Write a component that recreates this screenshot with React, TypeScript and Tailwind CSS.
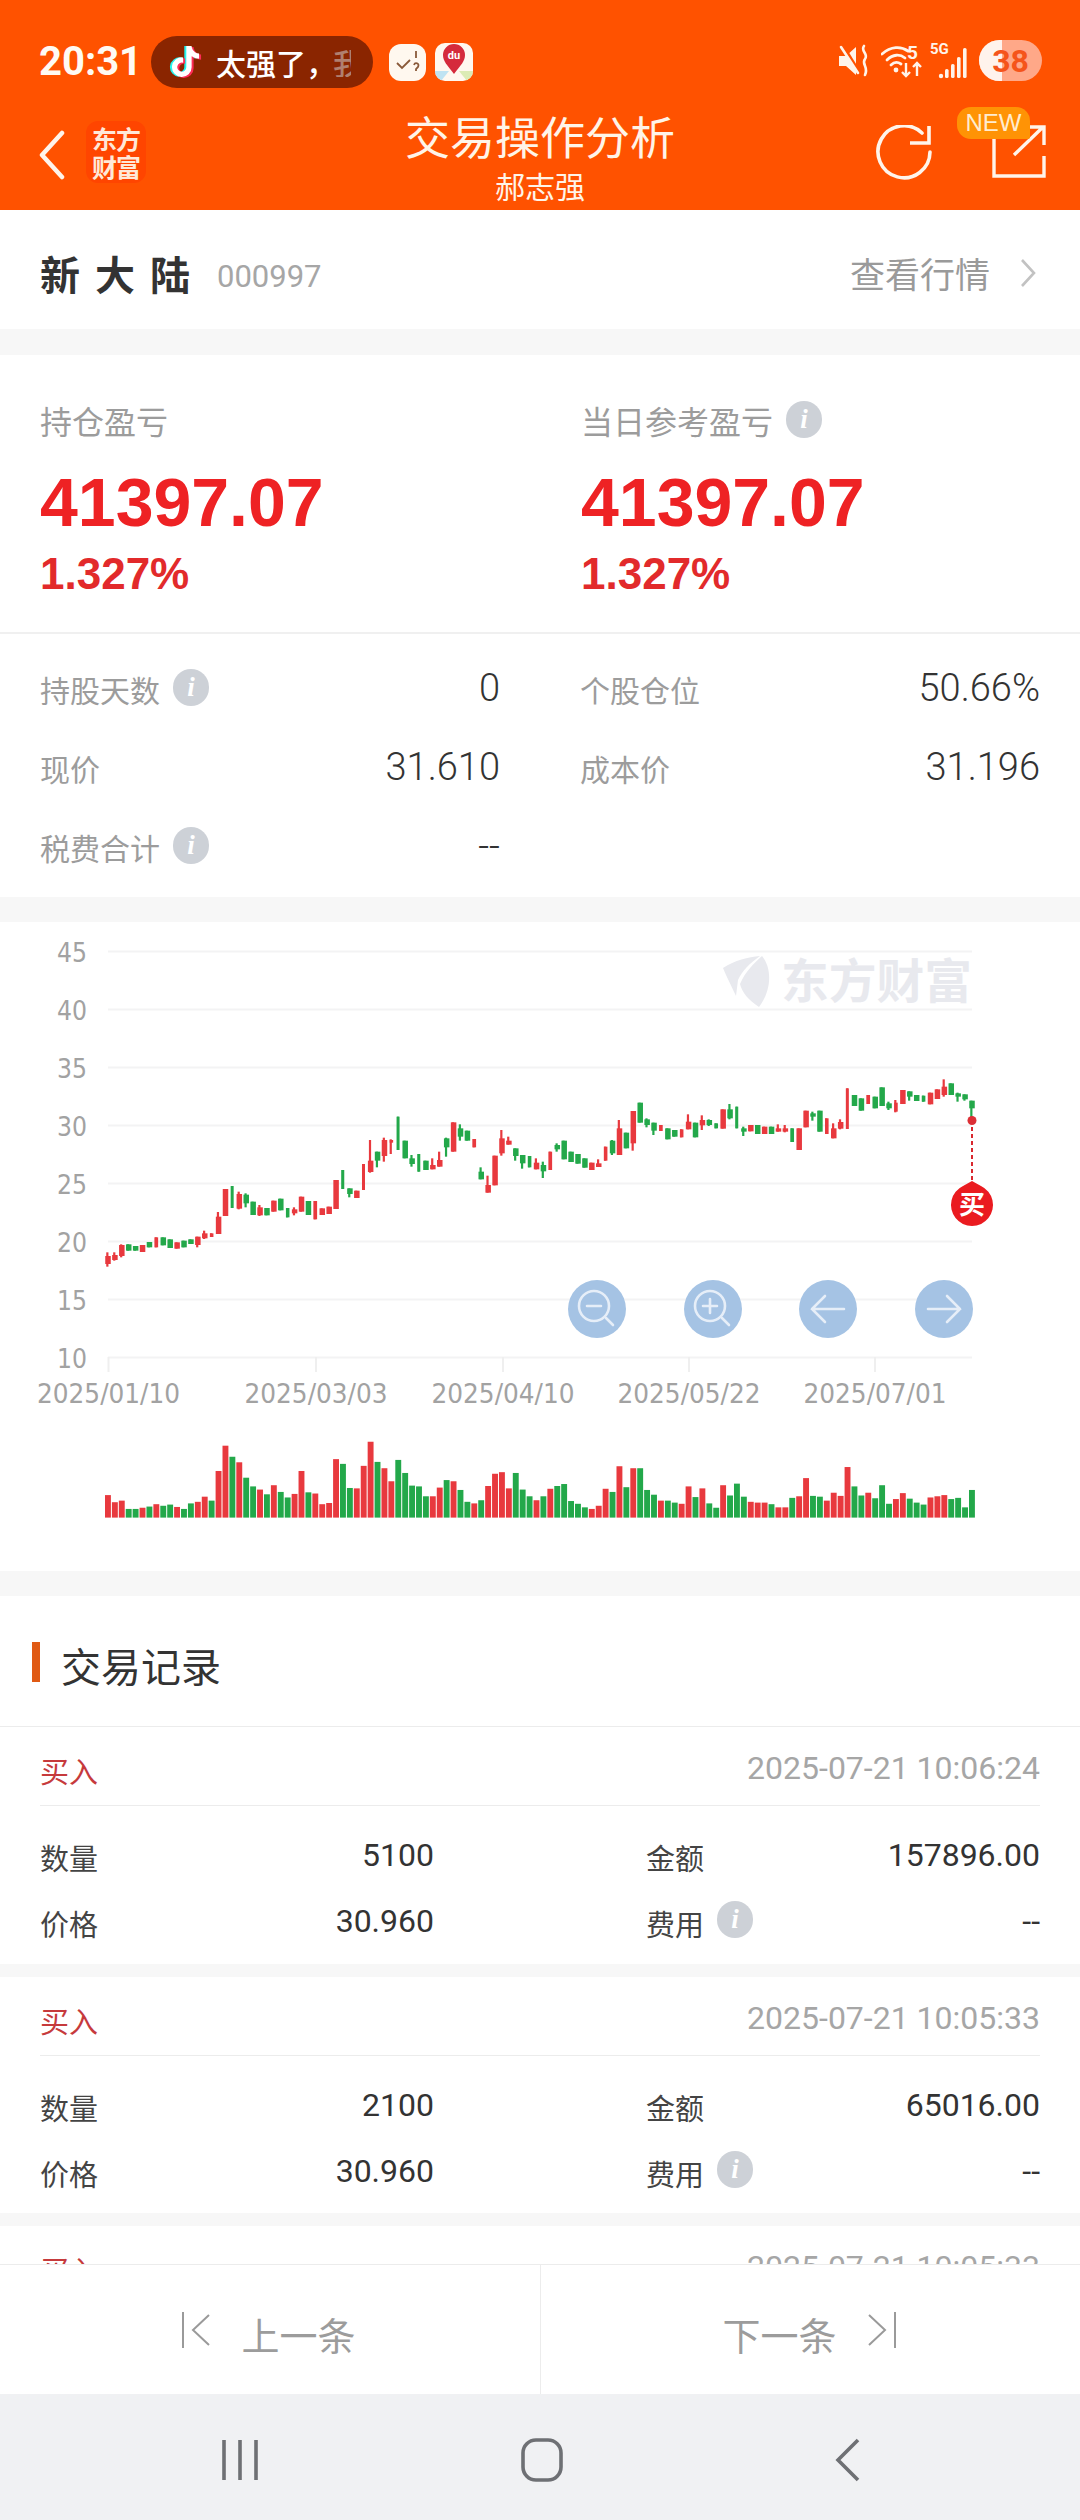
import React from "react";
import { FaTiktok } from "react-icons/fa";

type C = [number, number, number, number?, number?, number?];
const R = 1, G = 0;
// [colour, top, bottom, bodyTop, bodyBottom, bodyWidth] in crop pixels (3x)
const c1: C[] = [
  [R,397,440,408,432],[R,397,422,405,420],[R,373,412,375,408],[G,373,392],[G,378,392],[R,375,396],[G,366,382],[R,352,382,352,382,3.5],[G,352,376],[G,358,384],[R,367,386],[G,362,382],[G,358,372],[R,350,382,350,375],[R,332,357,340,355],[R,340,351,340,351,3.5],[R,276,342,290,342],[R,207,288],[G,198,264,198,264,2.5],[R,215,268,222,266],[G,220,262,224,250],[G,245,285],[R,255,288,262,286],[G,264,286],[R,242,275],[G,236,271],[G,264,292,264,292,3.5],[R,262,286,268,280],[R,230,275],[G,243,285],[R,243,298,243,298,3.5],
];
const c2: C[] = [
  [R,355,375],[R,350,372],[R,270,357],[G,240,297,240,297,2.5],[G,295,322,295,312],[R,302,324],[R,222,300,222,300,2.5],[R,150,248,212,246],[G,185,232,185,212],[R,143,215,150,198],[R,148,192,150,158,3.5],[G,80,180,80,180,2.5],[G,152,205],[G,195,230,205,222],[G,192,245,192,245,2.5],[G,212,240],[R,205,238,225,238],[R,185,230,210,230],[G,143,200,145,172],[R,97,185],[G,103,152,115,140],[G,122,152],[R,147,172,147,172,3.5],[G,232,268,245,268],[R,257,308,285,308],[R,197,286],[R,120,197,145,190],[R,140,164,152,164],[G,175,212,175,198],[G,195,236,195,220],[G,198,232,198,232,3.5],[R,205,238,218,238],[G,215,264,225,244],
];
const c3: C[] = [
  [R,275,330,275,330,3.5],[G,250,275,255,268],[G,242,298],[G,275,306],[G,282,311],[G,295,323],[R,308,330],[R,298,321,310,321],[R,260,302,260,302,3.5],[G,240,285,242,280],[R,180,285,205,285],[G,218,265],[R,153,272,153,250],[G,128,188],[G,175,202,178,195],[G,188,225,188,212],[R,195,213,195,213,3.5],[G,205,238],[G,210,230],[R,208,232,208,232,3.5],[R,163,208,185,208],[G,188,232],[R,166,210,180,196],[G,178,198,180,195],[G,190,205,190,205,3.5],[R,148,206],[G,132,178,148,175],[G,140,205,140,205,2.5],[G,200,228,205,215],[R,195,214],[G,195,222],[R,200,222],
];
const c4: C[] = [
  [G,200,222],[R,193,215,205,215],[R,195,217,205,215],[G,205,246,205,246,3.5],[R,205,270],[R,152,202],[G,155,182,160,170],[G,152,215],[R,175,222,175,222,3.5],[R,190,235,205,235],[R,178,208,186,206],[R,85,207,85,207,2.5],[G,105,138],[G,115,152],[R,105,132,105,132,3.5],[G,110,145],[G,82,138],[G,125,150,130,145],[R,120,157,128,155,3.5],[R,90,132],[G,94,122,94,110],[G,105,123],[G,107,125,107,125,3.5],[R,98,133],[R,88,117],[R,58,110,80,105],[G,70,105],[G,98,125,100,110],[G,103,122,103,118],[G,122,172,122,145],
];
const candles: { c: number; t: number; b: number; bt: number; bb: number; w: number }[] = [
  ...c1.map((d) => [1120, d] as const),
  ...c2.map((d) => [1090, d] as const),
  ...c3.map((d) => [1060, d] as const),
  ...c4.map((d) => [1060, d] as const),
].map(([base, d]) => ({
  c: d[0],
  t: base + d[1] / 3,
  b: base + d[2] / 3,
  bt: base + (d[3] ?? d[1]) / 3,
  bb: base + (d[4] ?? d[2]) / 3,
  w: d[5] ?? 5.5,
}));

const vol =
  "R1455 R1473 R1469 G1490 G1490 R1487 G1484 R1478 G1482 G1479 R1485 G1490 G1476 R1472 R1459 G1469 R1394 R1330 G1358 R1372 G1411 G1433 R1441 G1453 R1430 G1447 G1461 R1452 R1394 G1448 R1451 R1478 R1475 R1364 G1376 G1437 R1438 R1381 R1320 G1371 R1387 R1420 G1366 G1399 G1431 G1433 G1458 R1458 R1436 G1417 R1420 G1442 G1472 R1476 G1468 R1432 R1401 R1397 R1438 G1399 G1441 G1458 R1468 G1458 R1439 G1432 G1427 G1470 G1477 G1486 R1490 R1482 R1439 G1447 R1382 G1435 R1387 G1387 G1442 G1454 R1469 G1469 G1474 R1477 R1433 G1460 R1438 G1476 G1487 R1430 G1456 G1426 G1459 R1472 R1474 R1474 G1478 R1486 R1486 G1462 R1458 R1412 G1457 G1459 R1469 R1449 R1457 R1384 G1433 G1456 R1449 G1463 G1430 G1477 R1465 R1450 G1464 G1474 G1479 R1461 R1458 R1455 G1465 G1462 G1486 G1442".split(
    " "
  );

const RED = "#e8393e";
const GREEN = "#23a84a";
const OFFSET = 922;
const xAt = (i: number) => 108 + 6.912 * i;

function Chart() {
  const grid = [951.6, 1009.6, 1067.6, 1125.6, 1183.6, 1241.6, 1299.6, 1357.6];
  const labels = ["45", "40", "35", "30", "25", "20", "15", "10"];
  const ticks: [number, string][] = [
    [108.5, "2025/01/10"],
    [316, "2025/03/03"],
    [503, "2025/04/10"],
    [689, "2025/05/22"],
    [875, "2025/07/01"],
  ];
  return (
    <svg width="1080" height="649" viewBox={`0 ${OFFSET} 1080 649`} className="block">
      {grid.map((y) => (
        <line key={y} x1="108" x2="972" y1={y} y2={y} stroke="#f3f3f4" strokeWidth="2" />
      ))}
      {grid.map((y, i) => (
        <text key={y} x="87" y={y + 10} textAnchor="end" fontSize="27" fill="#a2a2a2" fontFamily="'DejaVu Sans',sans-serif" textLength="30" lengthAdjust="spacingAndGlyphs">
          {labels[i]}
        </text>
      ))}
      {ticks.map(([x, t]) => (
        <g key={t}>
          <line x1={x} x2={x} y1="1357" y2="1372" stroke="#efefef" strokeWidth="2" />
          <text x={x} y="1403" textAnchor="middle" fontSize="27" fill="#a2a2a2" fontFamily="'DejaVu Sans',sans-serif" textLength="143" lengthAdjust="spacingAndGlyphs">
            {t}
          </text>
        </g>
      ))}
      {/* watermark */}
      <path d="M723 968 C735 960 748 957 760 956 C750 963 742 971 738 980 L736 996 L726 975 Z" fill="#e8e9ee" />
      <path d="M762 956 C772 968 772 990 759 1007 C748 1000 742 992 740 984 C745 972 754 963 762 956 Z" fill="#e8e9ee" />
      <text x="781" y="998" fontSize="47" fontWeight="700" fill="#e8e9ee" fontFamily="'Noto Sans CJK SC',sans-serif" textLength="191" lengthAdjust="spacingAndGlyphs">
        东方财富
      </text>
      {candles.map((k, i) => {
        const x = xAt(i);
        const col = k.c ? RED : GREEN;
        return (
          <g key={i}>
            <rect x={x - 1.75} y={k.t} width="2.2" height={k.b - k.t} fill={col} />
            <rect x={x - k.w / 2} y={k.bt} width={k.w} height={Math.max(k.bb - k.bt, 1)} fill={col} />
          </g>
        );
      })}
      {vol.map((v, i) => {
        const top = 920 + Number(v.slice(1)) / 2.53;
        return <rect key={i} x={xAt(i) - 3} y={top} width="5.9" height={1517.6 - top} fill={v[0] === "R" ? RED : GREEN} />;
      })}
      {/* buy marker */}
      <line x1="972" x2="972" y1="1120" y2="1182" stroke="#d9282e" strokeWidth="2" strokeDasharray="4 3" />
      <circle cx="972" cy="1120.5" r="4.5" fill="#dc2f35" />
      <path d="M972 1181 L981 1186 A21 21 0 1 1 963 1186 Z" fill="#ea1b20" />
      <text x="972" y="1214" textAnchor="middle" fontSize="26" fontWeight="700" fill="#fff" fontFamily="'Noto Sans CJK SC',sans-serif">
        买
      </text>
      {/* chart buttons */}
      {[597, 713, 828, 944].map((x) => (
        <circle key={x} cx={x} cy="1309" r="29" fill="#a5c3e4" />
      ))}
      <g fill="none" stroke="#e6eef8" strokeWidth="2.6" strokeLinecap="round">
        <circle cx="594" cy="1306" r="15" />
        <path d="M606 1318 L613 1325 M587 1306 H601" />
        <circle cx="710" cy="1306" r="15" />
        <path d="M722 1318 L729 1325 M703 1306 H717 M710 1299 V1313" />
        <path d="M812 1309 H844 M825 1296 L812 1309 L825 1322" />
        <path d="M928 1309 H960 M947 1296 L960 1309 L947 1322" />
      </g>
    </svg>
  );
}

function Info() {
  return (
    <span className="flex h-[37px] w-[36px] shrink-0 items-center justify-center rounded-full bg-[#cdd1d7] text-[27px] font-bold italic text-white [font-family:'Liberation_Serif',serif]">
      i
    </span>
  );
}

function Stat({ label, value, info, w }: { label?: string; value?: string; info?: boolean; w: string }) {
  return (
    <div className={`flex items-center justify-between ${w}`}>
      <div className="flex items-center gap-[13px]">
        <span className="text-[30px] text-[#9c9c9c]">{label}</span>
        {info && (
          <span className="-mt-[8px]">
            <Info />
          </span>
        )}
      </div>
      <span className="-mt-[6px] text-[38px] font-light text-[#333] [font-family:Roboto,sans-serif]">{value}</span>
    </div>
  );
}

function Field({ label, value, info, w }: { label: string; value: string; info?: boolean; w: string }) {
  return (
    <div className={`flex h-[66px] items-center justify-between ${w}`}>
      <div className="flex items-center gap-[13px]">
        <span className="mt-[14px] text-[29px] text-[#444]">{label}</span>
        {info && (
          <span className="-mt-[2px]">
            <Info />
          </span>
        )}
      </div>
      <span className="mt-[2px] text-[32px] text-[#333] [font-family:Roboto,sans-serif]">{value}</span>
    </div>
  );
}

function Trade({ time, qty, amount, className }: { time: string; qty: string; amount: string; className?: string }) {
  return (
    <div className={`bg-white px-[40px] ${className ?? ""}`}>
      <div className="flex h-[79px] items-center justify-between border-b border-[#ececec]">
        <span className="mt-[16px] text-[29px] text-[#c63a3c]">买入</span>
        <span className="mt-[4px] text-[32px] text-[#a6a6a6] [font-family:Roboto,sans-serif]">{time}</span>
      </div>
      <div className="flex flex-wrap justify-between pt-[15px]">
        <Field w="w-[394px]" label="数量" value={qty} />
        <Field w="w-[394px]" label="金额" value={amount} />
        <Field w="w-[394px]" label="价格" value="30.960" />
        <Field w="w-[394px]" label="费用" value="--" info />
      </div>
    </div>
  );
}

function StatusIcons() {
  return (
    <div className="mb-[7px] flex items-center">
      {/* mute */}
      <svg width="32" height="34" viewBox="0 0 32 34">
        <path d="M1 12 H8 L18 3 V31 L8 22 H1 Z" fill="#fff4ea" />
        <path d="M4 1 L22 30" stroke="#ff5200" strokeWidth="4" />
        <path d="M3 3 L20 29" stroke="#fff4ea" strokeWidth="2.6" strokeLinecap="round" />
        <path d="M26 2 C22 7 31 10 27 15 C23 20 31 23 27 31" fill="none" stroke="#fff4ea" strokeWidth="2.6" strokeLinecap="round" />
      </svg>
      {/* wifi */}
      <svg width="42" height="36" viewBox="0 0 42 36" className="ml-[11px]">
        <g fill="none" stroke="#fff4ea" strokeWidth="2.8" strokeLinecap="round">
          <path d="M1 11 C10 3 20 3 27 8" />
          <path d="M6 17 C12 11 19 11 24 15" />
          <path d="M10 22 C13 19 17 19 20 21" />
        </g>
        <circle cx="15" cy="27" r="2.4" fill="#fff4ea" />
        <text x="26" y="16" fontSize="19" fontWeight="700" fill="#fff4ea" fontFamily="Roboto,sans-serif">
          5
        </text>
        <path d="M25 20 V33 M21 29 L25 33 L29 29 M36 33 V20 M32 24 L36 20 L40 24" fill="none" stroke="#fff4ea" strokeWidth="2.4" />
      </svg>
      {/* signal */}
      <div className="relative ml-[7px] h-[36px] w-[38px]">
        <span className="absolute left-0 top-[-3px] text-[15px] font-bold leading-[18px] text-[#fff4ea] [font-family:Roboto,sans-serif]">5G</span>
        <svg width="38" height="36" viewBox="0 0 38 36" className="absolute left-0 top-0">
          <g fill="#fff4ea">
            <circle cx="11" cy="33" r="2.2" />
            <rect x="15" y="26" width="3.6" height="9" rx="1.6" />
            <rect x="21" y="21" width="3.6" height="14" rx="1.6" />
            <rect x="27" y="14" width="3.6" height="21" rx="1.6" />
            <rect x="33" y="5" width="3.6" height="30" rx="1.6" />
          </g>
        </svg>
      </div>
      {/* battery */}
      <div className="relative ml-[11px] flex h-[41px] w-[63px] items-center justify-center overflow-hidden rounded-full bg-[#ffa888]">
        <span className="absolute inset-y-0 left-0 w-[23px] bg-[#fff3ec]" />
        <span className="relative text-[32px] font-bold leading-none text-[#f5541a] [font-family:Roboto,sans-serif]">38</span>
      </div>
    </div>
  );
}

function Header() {
  return (
    <header className="h-[210px] shrink-0 bg-[#ff5200] [font-family:'Noto_Sans_CJK_SC',sans-serif]">
      <div className="flex h-[104px] items-end justify-between pb-[16px] pl-[39px] pr-[38px]">
        <div className="flex items-center">
          <span className="w-[100px] text-[40px] font-bold leading-none text-[#fffaf3] [font-family:Roboto,sans-serif]">20:31</span>
          <div className="ml-[12px] flex h-[52px] w-[222px] items-center overflow-hidden rounded-full bg-[#8a2500] pl-[19px]">
            <span className="relative h-[32px] w-[28px] shrink-0">
              <FaTiktok className="absolute left-[-2px] top-0 text-[31px] text-[#25f4ee]" />
              <FaTiktok className="absolute left-[2px] top-[1px] text-[31px] text-[#fe2c55]" />
              <FaTiktok className="absolute left-0 top-0 text-[31px] text-white" />
            </span>
            <span className="ml-[18px] whitespace-nowrap text-[30px] font-medium leading-none text-white">太强了，</span>
            <span className="ml-[-3px] w-[18px] overflow-hidden text-[30px] font-medium leading-none text-[#b08070]">我</span>
          </div>
          <div className="ml-[16px] flex h-[37px] w-[37px] items-center justify-center rounded-[12px] bg-[#fff8ef]">
            <svg width="28" height="28" viewBox="0 0 28 28" fill="none" stroke="#8a5a3a" strokeWidth="1.8">
              <path d="M3 15 L8 20 L16 12" />
              <path d="M22 3 V10 M20 17 C21 14 26 15 24 19 L22 21 V23" />
            </svg>
          </div>
          <div className="ml-[9px] flex h-[38px] w-[38px] flex-col items-center overflow-hidden rounded-[10px] bg-[#fff8ef]">
            <svg width="38" height="38" viewBox="0 0 38 38">
              <path d="M0 28 L14 28 L6 38 H0 Z" fill="#bfe3f2" />
              <path d="M24 28 H38 V38 H32 Z" fill="#dcebb5" />
              <path d="M19 31 C12 22 8 18 8 12 A11 11 0 0 1 30 12 C30 18 26 22 19 31 Z" fill="#d52b3c" />
              <text x="19" y="16" textAnchor="middle" fontSize="11" fontWeight="700" fill="#fff" fontFamily="Roboto,sans-serif">
                du
              </text>
            </svg>
          </div>
        </div>
        <StatusIcons />
      </div>
      <div className="grid h-[106px] grid-cols-[1fr_auto_1fr]">
        <div className="flex items-start pl-[39px] pt-[17px]">
          <svg width="26" height="50" viewBox="0 0 26 50" className="mt-[9px]" fill="none" stroke="#fff4ea" strokeWidth="4.5" strokeLinecap="round" strokeLinejoin="round">
            <path d="M23 3 L3 25 L23 47" />
          </svg>
          <div className="ml-[21px] flex h-[62px] w-[60px] flex-col items-center justify-center rounded-[12px] bg-[#ff4500] text-[25px] font-bold leading-[28px] tracking-[-1px] text-[#ffe8d8]">
            <span>东方</span>
            <span>财富</span>
          </div>
        </div>
        <div className="flex flex-col items-center text-[#fff4e8]">
          <span className="mt-[1px] text-[45px] leading-[62px]">交易操作分析</span>
          <span className="mt-[-2px] text-[30px] leading-[40px]">郝志强</span>
        </div>
        <div className="relative flex items-start justify-end pr-[34px] pt-[21px]">
          <span className="absolute right-[50px] top-[3px] z-10 flex h-[32px] w-[73px] items-center justify-center rounded-[14px] rounded-br-[2px] bg-[#ff9305] text-[24px] leading-none text-[#ffeccf] [font-family:'Liberation_Sans',sans-serif]">
            NEW
          </span>
          <svg width="58" height="56" viewBox="0 0 58 56" fill="none" stroke="#fff4ea" strokeWidth="3.6" strokeLinecap="round">
            <path d="M55 27 A26 26 0 1 1 47 8" />
            <path d="M54 1 V18 H35" strokeLinecap="butt" />
          </svg>
          <svg width="54" height="54" viewBox="0 0 54 54" className="ml-[59px]" fill="none" stroke="#fff4ea" strokeWidth="3.4">
            <path d="M2 10 V51 H52 V31" />
            <path d="M22 30 L51 2 M36 2 H52 V20" />
          </svg>
        </div>
      </div>
    </header>
  );
}

export default function App() {
  return (
    <div className="flex h-[2520px] w-[1080px] flex-col overflow-hidden bg-[#f7f7f7] [font-family:Roboto,'Noto_Sans_CJK_SC',sans-serif]">
      <Header />
      <main className="min-h-0 flex-1 overflow-hidden">
        {/* stock */}
        <section className="flex h-[119px] items-center justify-between bg-white pl-[40px] pr-[44px]">
          <div className="mt-[6px] flex items-center">
            <span className="text-[40px] font-bold tracking-[15px] text-[#333] [font-family:'Noto_Sans_CJK_SC',sans-serif]">新大陆</span>
            <span className="ml-[12px] mt-[10px] text-[31px] text-[#a6a6a6]">000997</span>
          </div>
          <div className="mt-[16px] flex items-center">
            <span className="text-[35px] text-[#9a9a9a]">查看行情</span>
            <svg width="16" height="30" viewBox="0 0 16 30" className="ml-[30px] -mt-[10px]" fill="none" stroke="#c2c2c2" strokeWidth="2.6">
              <path d="M2 2 L14 15 L2 28" />
            </svg>
          </div>
        </section>

        {/* position */}
        <section className="mt-[26px] h-[542px] bg-white">
          <div className="flex h-[279px] border-b-2 border-[#f0f0f0] pl-[40px] pt-[43px]">
            {[false, true].map((info, i) => (
              <div key={i} className="w-[541px] shrink-0">
                <div className="flex h-[50px] items-center gap-[13px]">
                  <span className="text-[32px] text-[#9c9c9c]">{info ? "当日参考盈亏" : "持仓盈亏"}</span>
                  {info && (
                    <span className="-mt-[8px]">
                      <Info />
                    </span>
                  )}
                </div>
                <div className="mt-[15px] text-[68px] font-bold leading-[78px] text-[#ee2224] [font-family:'Liberation_Sans',sans-serif]">41397.07</div>
                <div className="mt-[7px] text-[44px] font-bold leading-[52px] text-[#e22a2b] [font-family:'Liberation_Sans',sans-serif]">1.327%</div>
              </div>
            ))}
          </div>
          <div className="flex flex-wrap justify-between px-[40px] pt-[18px]">
            <div className="flex h-[79px] w-full justify-between">
              <Stat w="w-[460px]" label="持股天数" value="0" info />
              <Stat w="w-[460px]" label="个股仓位" value="50.66%" />
            </div>
            <div className="flex h-[79px] w-full justify-between">
              <Stat w="w-[460px]" label="现价" value="31.610" />
              <Stat w="w-[460px]" label="成本价" value="31.196" />
            </div>
            <div className="flex h-[79px] w-full justify-between">
              <Stat w="w-[460px]" label="税费合计" value="--" info />
            </div>
          </div>
        </section>

        {/* chart */}
        <section className="mt-[25px] h-[649px] bg-white">
          <Chart />
        </section>

        {/* records */}
        <section className="mt-[25px]">
          <div className="flex h-[131px] items-center border-b border-[#ececec] bg-white pl-[32px]">
            <span className="mt-[2px] h-[40px] w-[8px] bg-[#e05a14]" />
            <span className="ml-[21px] mt-[16px] text-[40px] leading-none text-[#333]">交易记录</span>
          </div>
          <Trade className="h-[237px]" time="2025-07-21 10:06:24" qty="5100" amount="157896.00" />
          <Trade className="mt-[13px] h-[236px]" time="2025-07-21 10:05:33" qty="2100" amount="65016.00" />
          <Trade className="mt-[13px] h-[100px]" time="2025-07-21 10:05:33" qty="2100" amount="65016.00" />
        </section>
      </main>

      {/* pager */}
      <footer className="flex h-[130px] shrink-0 border-t border-[#ececec] bg-white text-[#9c9c9c]">
        <div className="flex flex-1 items-center justify-center border-r border-[#ececec] pr-[3px]">
          <svg width="30" height="38" viewBox="0 0 30 38" fill="none" stroke="#9a9a9a" strokeWidth="2">
            <path d="M2 1 V37 M28 4 L12 19 L28 34" />
          </svg>
          <span className="ml-[30px] mt-[16px] text-[38px]">上一条</span>
        </div>
        <div className="flex flex-1 items-center justify-center pr-[2px]">
          <span className="mt-[16px] text-[38px]">下一条</span>
          <svg width="30" height="38" viewBox="0 0 30 38" className="ml-[30px]" fill="none" stroke="#9a9a9a" strokeWidth="2">
            <path d="M28 1 V37 M2 4 L18 19 L2 34" />
          </svg>
        </div>
      </footer>

      {/* system nav */}
      <nav className="flex h-[126px] shrink-0 items-center justify-center bg-[#f0f1f3] pt-[6px]">
        <svg width="40" height="42" viewBox="0 0 40 42" className="mr-[261px]" fill="none" stroke="#6e7074" strokeWidth="3.6">
          <path d="M4 1 V41 M20 1 V41 M36 1 V41" />
        </svg>
        <svg width="42" height="44" viewBox="0 0 42 44" fill="none" stroke="#6e7074" strokeWidth="3.6">
          <rect x="2" y="2" width="38" height="40" rx="13" />
        </svg>
        <svg width="26" height="44" viewBox="0 0 26 44" className="ml-[272px]" fill="none" stroke="#6e7074" strokeWidth="3.6">
          <path d="M23 2 L3 22 L23 42" />
        </svg>
      </nav>
    </div>
  );
}
